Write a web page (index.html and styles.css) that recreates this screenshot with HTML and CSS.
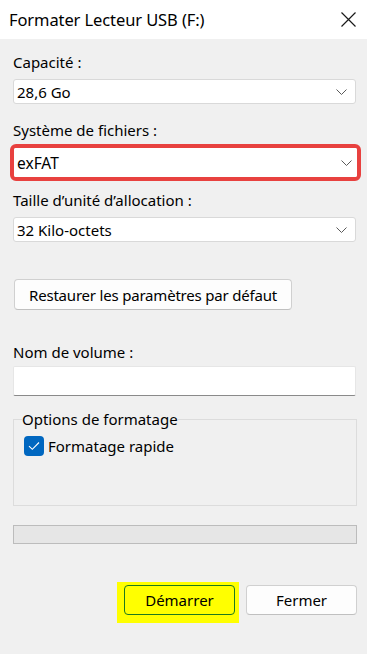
FILE: index.html
```html
<!DOCTYPE html>
<html lang="fr">
<head>
<meta charset="utf-8">
<title>Formater Lecteur USB (F:)</title>
<link rel="stylesheet" href="styles.css">
</head>
<body>
<div class="win">
  <header class="titlebar">
    <span class="title">Formater Lecteur USB (F:)</span>
    <svg class="close" width="15" height="15" viewBox="0 0 15 15" aria-hidden="true">
      <path d="M0.5 0.5 L14.5 14.5 M14.5 0.5 L0.5 14.5" stroke="#1a1a1a" stroke-width="1.2" fill="none"/>
    </svg>
  </header>
  <main class="content">
    <div class="lbl first">Capacité :</div>
    <div class="combo">
      <span>28,6 Go</span>
      <svg class="chev" width="11" height="6" viewBox="0 0 11 6"><path d="M0.5 0.5 L5.5 5.5 L10.5 0.5" stroke="#5a5a5a" stroke-width="1" fill="none"/></svg>
    </div>

    <div class="lbl l2">Système de fichiers :</div>
    <div class="hl">
      <div class="combo inhl">
        <span>exFAT</span>
        <svg class="chev" width="11" height="6" viewBox="0 0 11 6"><path d="M0.5 0.5 L5.5 5.5 L10.5 0.5" stroke="#5a5a5a" stroke-width="1" fill="none"/></svg>
      </div>
    </div>

    <div class="lbl l3">Taille d’unité d’allocation :</div>
    <div class="combo">
      <span>32 Kilo-octets</span>
      <svg class="chev" width="11" height="6" viewBox="0 0 11 6"><path d="M0.5 0.5 L5.5 5.5 L10.5 0.5" stroke="#5a5a5a" stroke-width="1" fill="none"/></svg>
    </div>

    <div class="restore-row">
      <button class="btn restore">Restaurer les paramètres par défaut</button>
    </div>

    <div class="lbl l4">Nom de volume :</div>
    <div class="textbox"></div>

    <fieldset class="group">
      <legend class="legend">Options de formatage</legend>
      <div class="check-row">
        <span class="checkbox">
          <svg width="12" height="10" viewBox="0 0 12 10"><path d="M1 5.2 L4.3 8.3 L11 1.5" stroke="#ffffff" stroke-width="1.1" fill="none"/></svg>
        </span>
        <span class="check-label">Formatage rapide</span>
      </div>
    </fieldset>

    <div class="progress"></div>

    <div class="actions">
      <div class="yellow">
        <button class="btn start">Démarrer</button>
      </div>
      <button class="btn closebtn">Fermer</button>
    </div>
  </main>
</div>
</body>
</html>
```

FILE: styles.css
```css
* { box-sizing: border-box; }
html, body { margin: 0; padding: 0; }
body {
  width: 367px;
  height: 654px;
  background: #f0f0f0;
  font-family: "Noto Sans", "DejaVu Sans", sans-serif;
  font-size: 15px;
  color: #000;
  overflow: hidden;
}
.win { width: 367px; height: 654px; display: flex; flex-direction: column; }
.titlebar {
  height: 39px;
  background: #ffffff;
  display: flex;
  align-items: center;
  justify-content: space-between;
  padding: 0 11px 0 9px;
}
.title { font-size: 16.5px; line-height: 20px; color: #000; letter-spacing: -0.1px; }
.close { display: block; margin-top: 0; }
.content {
  flex: 1;
  background: #f0f0f0;
  padding: 0 10px 0 13px;
  display: flex;
  flex-direction: column;
}
.lbl { line-height: 20px; height: 20px; }
.first { margin-top: 13px; }
.l2 { margin-top: 16px; }
.l3 { margin-top: 9px; }
.l4 { margin-top: 32px; }
.combo {
  margin-top: 7px;
  margin-right: 1px;
  height: 25px;
  background: #ffffff;
  border: 1px solid #d9d9d9;
  border-radius: 3px;
  display: flex;
  align-items: center;
  justify-content: space-between;
  padding: 0 8px 0 3px;
  line-height: 20px;
}
.chev { display: block; }
.hl {
  margin: 4px -4px 0 -3px;
  border: 4px solid #e8413f;
  border-radius: 6px;
  background: #fff;
}
.combo.inhl {
  margin: 0;
  height: 29px;
  border: none;
  border-radius: 2px;
  padding: 0 5px 0 3px;
  font-size: 15.5px;
}
.restore-row { margin-top: 37px; display: flex; }
.btn {
  font-family: "Noto Sans", "DejaVu Sans", sans-serif;
  font-size: 15px;
  line-height: 20px;
  color: #000;
  background: #fdfdfd;
  border: 1px solid #d0d0d0;
  border-bottom-color: #c0c0c0;
  border-radius: 4px;
  height: 31px;
  padding: 0;
  margin: 0;
}
.restore { margin-left: 1px; width: 278px; letter-spacing: -0.2px; }
.textbox {
  margin-top: 4px;
  margin-right: 1px;
  height: 30px;
  background: #fff;
  border: 1px solid #e6e6e6;
  border-bottom: 1px solid #8a8a8a;
  border-radius: 2px;
}
.group {
  margin: 13px 0 0 0;
  border: 1px solid #dcdcdc;
  padding: 7px 10px 49px 10px;
  min-width: 0;
}
.legend {
  padding: 0;
  margin-left: -2px;
  line-height: 20px;
}
.check-row { display: flex; align-items: center; gap: 4px; height: 20px; }
.checkbox {
  width: 20px;
  height: 20px;
  border-radius: 4px;
  background: #0067c0;
  display: flex;
  align-items: center;
  justify-content: center;
}
.checkbox svg { display: block; }
.check-label { line-height: 20px; }
.progress {
  margin-top: 19px;
  height: 19px;
  background: #e6e6e6;
  border: 1px solid #bcbcbc;
}
.actions {
  margin-top: 38px;
  display: flex;
  justify-content: flex-end;
  align-items: flex-start;
}
.yellow {
  background: #ffff00;
  padding: 3px 4px 8px 7px;
}
.start {
  width: 111px;
  height: 30px;
  background: #ffff00;
  border: 1px solid #1e7a1e;
  display: block;
}
.closebtn {
  width: 111px;
  height: 30px;
  margin-top: 3px;
  margin-left: 7px;
}
```
